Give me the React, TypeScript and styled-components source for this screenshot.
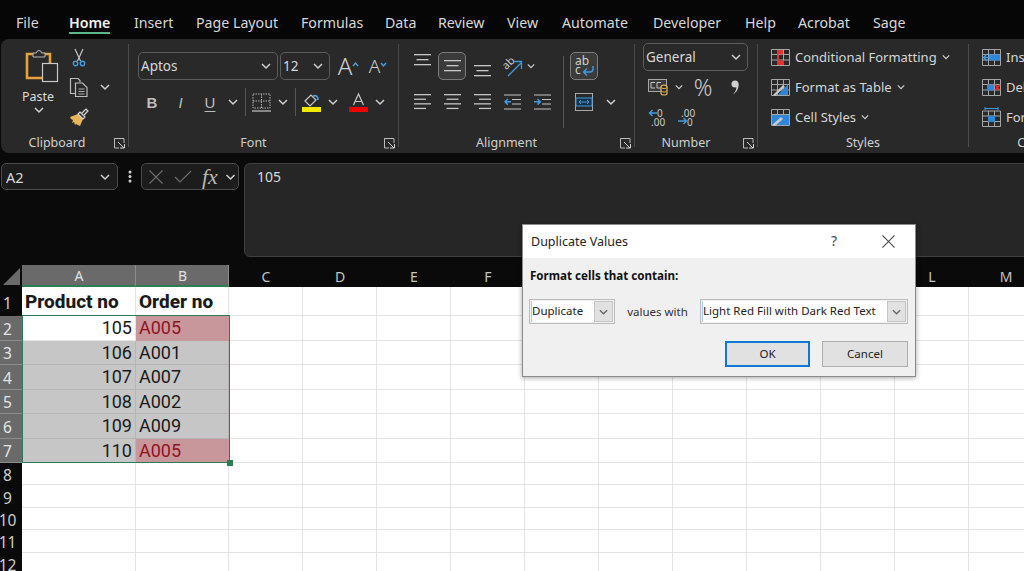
import React from 'react'
import styled, { createGlobalStyle } from 'styled-components'

const GlobalStyle = createGlobalStyle`
  html, body { margin: 0; padding: 0; background: #0a0a0a; overflow: hidden; }
  * { box-sizing: border-box; }
  svg { display: block; flex: none; overflow: visible; }
`

const UI = `"Noto Sans", "Open Sans", "Liberation Sans", sans-serif`

const Page = styled.div`
  position: relative;
  width: 1024px;
  height: 571px;
  overflow: hidden;
  background: #0a0a0a;
  font-family: ${UI};
  color: #dcdcdc;
`

/* menu */
const Menu = styled.nav`
  display: flex;
  height: 39px;
  padding-left: 16px;
  background: #060606;
`
const Tab = styled.div<{ $w: number; $active?: boolean }>`
  flex: none;
  width: ${p => p.$w}px;
  height: 34px;
  padding-top: 13px;
  font-size: 14.2px;
  line-height: 20px;
  white-space: nowrap;
  font-weight: ${p => (p.$active ? 600 : 400)};
  color: ${p => (p.$active ? '#f4f4f4' : '#d8d8d8')};
`
const TabLabel = styled.span<{ $active?: boolean }>`
  display: inline-block;
  height: 21px;
  border-bottom: ${p => (p.$active ? '2px solid #5fb58a' : 'none')};
`

/* ribbon */
const Ribbon = styled.section`
  display: flex;
  width: 1140px;
  height: 114px;
  margin-left: 1px;
  background: #292929;
  border-radius: 8px;
`
const Group = styled.div<{ $w: number }>`
  flex: none;
  width: ${p => p.$w}px;
  display: flex;
  flex-direction: column;
`
const GroupSep = styled.div`
  flex: none;
  width: 1px;
  height: 103px;
  margin-top: 5px;
  background: #4b4b4b;
`
const Body = styled.div<{ $top?: number; $left?: number }>`
  flex: none;
  height: 96px;
  display: flex;
  padding-top: ${p => p.$top ?? 3}px;
  padding-left: ${p => p.$left ?? 0}px;
`
const Footer = styled.div<{ $left?: number }>`
  flex: none;
  display: flex;
  height: 14px;
  margin-top: 1px;
  padding-left: ${p => p.$left ?? 0}px;
  align-items: center;
`
const GroupLabel = styled.div`
  flex: 1;
  text-align: center;
  font-size: 12.5px;
  line-height: 14px;
  color: #cfcfcf;
  white-space: nowrap;
`
const LauncherSlot = styled.div`
  flex: none;
  width: 20px;
  display: flex;
  justify-content: center;
  padding-left: 2px;
`
const Col = styled.div<{ $w?: number }>`
  flex: none;
  display: flex;
  flex-direction: column;
  ${p => (p.$w ? `width: ${p.$w}px;` : '')}
`
const Row = styled.div<{ $h?: number }>`
  display: flex;
  align-items: center;
  height: ${p => p.$h ?? 30}px;
`
const Slot = styled.span<{ $w: number }>`
  flex: none;
  display: flex;
  align-items: center;
  justify-content: center;
  width: ${p => p.$w}px;
  height: 100%;
  color: #d0d0d0;
`
const Pressed = styled.span`
  display: flex;
  align-items: center;
  justify-content: center;
  width: 28px;
  height: 28px;
  border: 1px solid #7c7c7c;
  border-radius: 5px;
  background: #3b3b3b;
`
const InnerSep = styled.span<{ $h: number }>`
  display: block;
  width: 1px;
  height: ${p => p.$h}px;
  background: #565656;
`
const PasteBox = styled.div`
  width: 56px;
  margin-left: 9px;
  display: flex;
  flex-direction: column;
  align-items: center;
  padding-top: 6px;
`
const PasteArt = styled.div`
  margin-left: 7px;
`
const PasteLabel = styled.div`
  margin-top: 5px;
  font-size: 12.5px;
  line-height: 20px;
  color: #dcdcdc;
`
const Field = styled.div<{ $w: number }>`
  flex: none;
  display: flex;
  align-items: center;
  justify-content: space-between;
  width: ${p => p.$w}px;
  height: 28px;
  padding: 0 6px 0 2px;
  border: 1px solid #5c5c5c;
  border-radius: 5px;
  font-size: 13.5px;
  color: #d8d8d8;
`
const FontA = styled.span<{ $size: number }>`
  font-size: ${p => p.$size}px;
  font-weight: 300;
  line-height: 1;
  color: #cfcfcf;
`
const FormatB = styled.span<{ $bold?: boolean; $italic?: boolean; $under?: boolean }>`
  font-family: "Liberation Sans", sans-serif;
  font-size: 15px;
  font-weight: ${p => (p.$bold ? 700 : 400)};
  font-style: ${p => (p.$italic ? 'italic' : 'normal')};
  color: #bdbdbd;
  ${p => (p.$under ? 'text-decoration: underline; text-underline-offset: 3px;' : '')}
`
const Percent = styled.span`
  font-size: 23px;
  font-weight: 300;
  line-height: 1;
  color: #c9c9c9;
`
const StyleRow = styled.div`
  display: flex;
  align-items: center;
  gap: 5px;
  height: 30px;
  font-size: 13px;
  white-space: nowrap;
  color: #d6d6d6;
`
const Caret = styled.span`
  margin-left: 2px;
  display: flex;
`

/* formula bar */
const FormulaArea = styled.section`
  display: flex;
  height: 112px;
  padding: 10px 0 8px 1px;
`
const NameBox = styled.div`
  flex: none;
  display: flex;
  align-items: center;
  justify-content: space-between;
  width: 117px;
  height: 27px;
  padding: 0 6px 0 4px;
  border: 1px solid #4a4a4a;
  border-radius: 5px;
  background: #1c1c1c;
  font-size: 14.5px;
  color: #d8d8d8;
`
const DotsSlot = styled.div`
  flex: none;
  width: 23px;
  height: 27px;
  display: flex;
  align-items: center;
  justify-content: center;
`
const FxBox = styled.div`
  flex: none;
  display: flex;
  align-items: center;
  width: 98px;
  height: 27px;
  padding-left: 7px;
  border: 1px solid #4a4a4a;
  border-radius: 5px;
  background: #1c1c1c;
`
const FxText = styled.span`
  width: 23px;
  margin-left: 10px;
  font-family: "Liberation Serif", serif;
  font-style: italic;
  font-size: 22px;
  line-height: 1;
  color: #b8b8b8;
`
const FormulaInput = styled.div`
  flex: none;
  width: 800px;
  margin-left: 5px;
  padding: 1px 0 0 12px;
  border: 1px solid #3f3f3f;
  border-radius: 6px;
  background: #262626;
  font-size: 14px;
  line-height: 24px;
  color: #d8d8d8;
`

/* sheet */
const Sheet = styled.section`
  position: relative;
  display: grid;
  grid-template-columns: 22px 114px 93px repeat(11, 74px);
  grid-template-rows: 22px 29px repeat(6, 24.5px) repeat(5, 22.4px);
`
const Corner = styled.div`
  display: flex;
  align-items: flex-end;
  justify-content: flex-end;
  padding: 0 2px 2px 0;
`
const ColHead = styled.div<{ $sel?: boolean }>`
  display: flex;
  align-items: center;
  justify-content: center;
  padding: 1px 0 0 1px;
  font-size: 14px;
  color: ${p => (p.$sel ? '#e0e0e0' : '#c4c4c4')};
  background: ${p => (p.$sel ? '#6a6a6a' : '#0a0a0a')};
  border-right: 1px solid ${p => (p.$sel ? '#8c8c8c' : '#0a0a0a')};
  ${p => (p.$sel ? 'border-bottom: 2px solid #2d7d54;' : '')}
`
const RowHead = styled.div<{ $sel?: boolean }>`
  display: flex;
  align-items: center;
  justify-content: center;
  padding: 2px 7px 0 0;
  font-size: 15.5px;
  line-height: 20px;
  color: ${p => (p.$sel ? '#e4e4e4' : '#cfcfcf')};
  background: ${p => (p.$sel ? '#6a6a6a' : '#0a0a0a')};
  ${p => (p.$sel ? 'border-bottom: 1px solid #8c8c8c;' : '')}
`
const Cell = styled.div<{ $fill?: string; $align?: string; $color?: string; $bold?: boolean; $line?: string }>`
  display: flex;
  align-items: center;
  justify-content: ${p => (p.$align === 'right' ? 'flex-end' : 'flex-start')};
  padding: 0 3px;
  font-family: Roboto, "Liberation Sans", sans-serif;
  font-size: ${p => (p.$bold ? 19 : 18)}px;
  font-weight: ${p => (p.$bold ? 800 : 400)};
  color: ${p => p.$color ?? '#1a1a1a'};
  background: ${p => p.$fill ?? '#ffffff'};
  border-right: 1px solid ${p => p.$line ?? '#e4e4e4'};
  border-bottom: 1px solid ${p => p.$line ?? '#e4e4e4'};
  white-space: nowrap;
  overflow: hidden;
`
const Selection = styled.div`
  position: absolute;
  left: 22px;
  top: 50px;
  width: 208px;
  height: 148px;
  border: 1.5px solid #2d7d54;
  pointer-events: none;
`
const FillHandle = styled.div`
  position: absolute;
  right: -4px;
  bottom: -4px;
  width: 6px;
  height: 6px;
  background: #2d7d54;
`

/* dialog */
const Dialog = styled.div`
  position: absolute;
  left: 522px;
  top: 224px;
  width: 394px;
  height: 153px;
  background: #f0f0f0;
  border: 1px solid #8a8a8a;
  box-shadow: 0 1px 5px rgba(0, 0, 0, 0.35);
  color: #222;
`
const DialogTitle = styled.div`
  display: flex;
  align-items: center;
  height: 33px;
  padding-left: 8px;
  background: #fff;
  font-size: 12.5px;
`
const TitleText = styled.span`
  flex: 1;
`
const HelpMark = styled.span`
  width: 51px;
  font-size: 14px;
  color: #444;
  margin-bottom: 2px;
`
const CloseSlot = styled.span`
  width: 33px;
`
const FormatLabel = styled.div`
  margin: 10px 0 0 7px;
  font-size: 11.6px;
  font-weight: 700;
  line-height: 16px;
  color: #111;
`
const DialogRow = styled.div`
  display: flex;
  align-items: center;
  margin: 15px 0 0 6px;
  height: 25px;
`
const Combo = styled.div<{ $w: number }>`
  flex: none;
  display: flex;
  width: ${p => p.$w}px;
  height: 25px;
  padding: 1px;
  border: 1px solid #bcbcbc;
  background: #f0f0f0;
`
const ComboText = styled.div`
  flex: 1;
  display: flex;
  align-items: center;
  background: #fff;
  padding: 0 0 2px 0;
  font-size: 11.5px;
  white-space: nowrap;
  border-left: 1px solid #9fd0f0;
`
const ComboBtn = styled.div`
  flex: none;
  width: 19px;
  display: flex;
  align-items: center;
  justify-content: center;
  background: #e1e1e1;
  border: 1px solid #c4c4c4;
`
const WithLabel = styled.div`
  flex: none;
  width: 85px;
  text-align: center;
  font-size: 11.5px;
  color: #333;
`
const DialogActions = styled.div`
  display: flex;
  justify-content: flex-end;
  gap: 12px;
  margin: 17px 7px 0 0;
`
const DialogButton = styled.div<{ $primary?: boolean }>`
  width: ${p => (p.$primary ? 85 : 86)}px;
  height: 26px;
  display: flex;
  align-items: center;
  justify-content: center;
  padding-bottom: 2px;
  font-size: 11.5px;
  background: #e1e1e1;
  border: ${p => (p.$primary ? '2px solid #0f78d4' : '1px solid #adadad')};
  color: #222;
`

/* icons */
const Chev = ({ c = '#cfcfcf', w = 10 }: { c?: string; w?: number }) => (
  <svg width={w} height={6} viewBox="0 0 10 6">
    <path d="M1 1l4 4 4-4" fill="none" stroke={c} strokeWidth={1.5} />
  </svg>
)
const Launcher = () => (
  <svg width={11} height={11} viewBox="0 0 11 11" fill="none">
    <path d="M5 .5H.5V10H5M.5 .5H10V5" stroke="#bbb" />
    <path d="M4 4l6 6M6 10h4.5V6" stroke="#d0d0d0" />
  </svg>
)
const PasteIcon = () => (
  <svg width={34} height={34} viewBox="0 0 34 34" fill="none">
    <path d="M9 6H2v24h18" stroke="#e6a03c" strokeWidth={2.6} />
    <path d="M17 6h8v9" stroke="#e6a03c" strokeWidth={2.6} />
    <path d="M8 9V5h3.5a2.5 2.5 0 0 1 5 0H20v4z" fill="#292929" stroke="#b8b8b8" />
    <rect x="17.5" y="15.5" width="15" height="18" fill="#292929" stroke="#c8c8c8" strokeWidth={1.2} />
  </svg>
)
const ScissorsIcon = () => (
  <svg width={14} height={19} viewBox="0 0 14 19" fill="none">
    <path d="M3 1l5.500 12M11 1L5.500 13" stroke="#c4c4c4" strokeWidth={1.2} />
    <circle cx="3.500" cy="15.500" r="2.200" stroke="#3f9be0" strokeWidth={1.4} />
    <circle cx="10.500" cy="15.500" r="2.200" stroke="#3f9be0" strokeWidth={1.4} />
  </svg>
)
const CopyIcon = () => (
  <svg width={20} height={20} viewBox="0 0 20 20" fill="none" stroke="#bdbdbd">
    <path d="M6 16.500H1.500v-15H9l2 2v2" strokeWidth={1.2} />
    <path d="M6.500 6h7l4.500 4.500v9H6.500z" strokeWidth={1.2} />
    <path d="M9.500 12h6M9.500 14.500h6M9.500 17h6" strokeWidth={0.9} />
  </svg>
)
const BrushIcon = () => (
  <svg width={20} height={19} viewBox="0 0 20 19" fill="none">
    <path d="M1 9l8-3 5 5-3 7-4-2-1 1-1-3-2 1 1-3-2-1z" fill="#e9b45a" />
    <path d="M9 6l5 5 2-2-5-5zM13 5l4-4 2 2-4 4" stroke="#d8d8d8" strokeWidth={1.2} />
  </svg>
)
const BorderIcon = () => (
  <svg width={19} height={19} viewBox="0 0 19 19" fill="none" stroke="#b0b0b0">
    <path d="M1 1h17v14H1zM9.500 1v14M1 8h17" strokeDasharray="1.500 1" />
    <path d="M0 18h19" strokeWidth={1.4} />
  </svg>
)
const FillIcon = () => (
  <svg width={19} height={19} viewBox="0 0 19 19" fill="none">
    <path d="M3 8l6-6 5 5-6 6z" stroke="#c8c8c8" strokeWidth={1.2} />
    <path d="M11 3c3-1 5 0 5 4" stroke="#4fa3e0" strokeWidth={1.6} />
    <rect x="0" y="14" width="19" height="5" fill="#f5e800" />
  </svg>
)
const FontColorIcon = () => (
  <svg width={19} height={19} viewBox="0 0 19 19" fill="none">
    <path d="M4.500 12L9.500 1l5 11M6.500 8.500h6" stroke="#c8c8c8" strokeWidth={1.2} />
    <rect x="0" y="14" width="19" height="5" fill="#ef0000" />
  </svg>
)
const Lines = ({ rows, align = 'left', w = 17, step = 4.6 }: { rows: number[]; align?: string; w?: number; step?: number }) => (
  <svg width={w} height={(rows.length - 1) * step + 2} viewBox={`0 0 ${w} ${(rows.length - 1) * step + 2}`}>
    {rows.map((l, i) => {
      const x = align === 'left' ? 0 : align === 'right' ? w - l : (w - l) / 2
      return <rect key={i} x={x} y={i * step} width={l} height={1.3} fill="#c4c4c4" />
    })}
  </svg>
)
const VAlign = ({ offset }: { offset: number }) => (
  <svg width={17} height={24} viewBox="0 0 17 24">
    {[17, 12, 17].map((l, i) => (
      <rect key={i} x={(17 - l) / 2} y={offset + i * 5} width={l} height={1.3} fill="#c8c8c8" />
    ))}
  </svg>
)
const OrientIcon = () => (
  <svg width={22} height={22} viewBox="0 0 22 22" fill="none">
    <text x="1" y="13" fontSize="11" fill="#c8c8c8" fontFamily="Noto Sans, sans-serif" transform="rotate(-45 6 9)">ab</text>
    <path d="M7 21L20 8M13 6.500h7.500V14" stroke="#3f9be0" strokeWidth={1.3} />
  </svg>
)
const IndentIcon = ({ dir }: { dir: number }) => (
  <svg width={17} height={16} viewBox="0 0 17 16" fill="none">
    <path d="M0 1h17M8 5.500h9M8 10h9M0 15h17" stroke="#c4c4c4" strokeWidth={1.2} />
    {dir < 0
      ? <path d="M7 7.800H1M3.800 5L1 7.800l2.800 2.800" stroke="#3f9be0" strokeWidth={1.5} />
      : <path d="M0 7.800h6M3.500 5l2.800 2.800L3.500 10.600" stroke="#3f9be0" strokeWidth={1.5} />}
  </svg>
)
const WrapIcon = () => (
  <svg width={22} height={24} viewBox="0 0 22 24" fill="none">
    <text x="2" y="11" fontSize="12" fill="#cfcfcf" fontFamily="Noto Sans, sans-serif">ab</text>
    <text x="2" y="20" fontSize="12" fill="#cfcfcf" fontFamily="Noto Sans, sans-serif">c</text>
    <path d="M20 12v3a3 3 0 0 1-3 3h-6M14 14.500L10.500 18l3.500 3.500" stroke="#3f9be0" strokeWidth={1.4} />
  </svg>
)
const MergeIcon = () => (
  <svg width={18} height={18} viewBox="0 0 18 18" fill="none">
    <rect x=".5" y=".5" width="17" height="17" stroke="#a8a8a8" />
    <rect x="1" y="5" width="16" height="8" fill="#16324a" stroke="#3f9be0" />
    <path d="M4 9h10M6 7L4 9l2 2M12 7l2 2-2 2" stroke="#3f9be0" />
  </svg>
)
const AccountingIcon = () => (
  <svg width={20} height={17} viewBox="0 0 20 17" fill="none">
    <rect x=".5" y=".5" width="18" height="12" fill="#3a3a3a" stroke="#a8a8a8" />
    <path d="M3 3.500h4M3 9h4M3 3.500v5.500M9 3.500h4M9 3.500v5.500h4" stroke="#c8c8c8" />
    <path d="M13 8c0-2.500 6-2.500 6 0v6.500c0 2-6 2-6 0z" fill="#292929" stroke="#e2b458" strokeWidth={1.2} />
    <path d="M13 8c0 2 6 2 6 0M13 11.500c0 2 6 2 6 0" stroke="#e2b458" />
  </svg>
)
const CommaIcon = () => (
  <svg width={10} height={15} viewBox="0 0 10 15">
    <circle cx="5" cy="4" r="3.500" fill="#d0d0d0" />
    <path d="M8.500 4c.5 4-1.500 8-5.500 10.500C6 11 7 8 6 6z" fill="#d0d0d0" />
  </svg>
)
const DecimalIcon = ({ more }: { more?: boolean }) => (
  <svg width={20} height={17} viewBox="0 0 20 17" fill="none">
    <text x={more ? 3 : 9} y="7.500" fontSize="10" fill="#c8c8c8" fontFamily="Noto Sans, sans-serif">{more ? '.00' : '0'}</text>
    <text x={more ? 9 : 3} y="16.500" fontSize="10" fill="#c8c8c8" fontFamily="Noto Sans, sans-serif">{more ? '0' : '.00'}</text>
    {more
      ? <path d="M0 12h8M5.500 9l3 3-3 3" stroke="#3f9be0" strokeWidth={1.4} />
      : <path d="M9 4H1.500M4.500 1l-3 3 3 3" stroke="#3f9be0" strokeWidth={1.4} />}
  </svg>
)
const GridBase = ({ children }: { children?: React.ReactNode }) => (
  <svg width={19} height={17} viewBox="0 0 19 17" fill="none">
    <path d="M.5 .5h18v16H.5zM6.500 .5v16M12.500 .5v16M.5 5.500h18M.5 11h18" stroke="#a6a6a6" />
    {children}
  </svg>
)
const CondIcon = () => (
  <GridBase>
    <rect x="6" y="1" width="6" height="4.500" fill="#e83030" />
    <rect x="6" y="5.500" width="2" height="6" fill="#e83030" />
    <rect x="6" y="11.500" width="7" height="4.500" fill="#e83030" />
  </GridBase>
)
const TableIcon = () => (
  <GridBase>
    <path d="M7 16L17 5v11z" fill="#2f86d8" />
    <path d="M2 16L12 6l2 2L4 17z" fill="#c8c8c8" />
  </GridBase>
)
const CellStyleIcon = () => (
  <GridBase>
    <rect x="1" y="6" width="17" height="10" fill="#2f86d8" />
    <path d="M1 16L10 8l2 2-8 7z" fill="#c8c8c8" />
  </GridBase>
)
const InsertIcon = () => (
  <GridBase>
    <rect x="7" y="5.500" width="11" height="6" fill="#2f86d8" />
    <path d="M9 8.500H2M5 5L1.500 8.500 5 12" stroke="#3f9be0" strokeWidth={1.3} />
  </GridBase>
)
const DeleteIcon = () => (
  <GridBase>
    <rect x="5" y="5.500" width="7" height="6" fill="#2f86d8" />
    <path d="M13 5.500l5 6M18 5.500l-5 6" stroke="#ea3030" strokeWidth={1.5} />
  </GridBase>
)
const FormatIcon = () => (
  <svg width={19} height={20} viewBox="0 0 19 20" fill="none">
    <path d="M3 1.500h13M3 0v3M16 0v3" stroke="#3f9be0" />
    <path d="M.5 4h18v15.500H.5zM6.500 4v15.500M12.500 4v15.500M.5 9h18M.5 14.500h18" stroke="#a6a6a6" />
    <rect x="6" y="9" width="7" height="6" fill="#2f86d8" />
  </svg>
)
const Dots = () => (
  <svg width={4} height={13} viewBox="0 0 4 13" fill="#d0d0d0">
    <circle cx="2" cy="2" r="1.500" /><circle cx="2" cy="6.500" r="1.500" /><circle cx="2" cy="11" r="1.500" />
  </svg>
)
const CrossIcon = ({ c = '#6e6e6e', s = 14 }: { c?: string; s?: number }) => (
  <svg width={s} height={s} viewBox="0 0 14 14">
    <path d="M.5 .5l13 13M13.500 .5l-13 13" stroke={c} strokeWidth={1.1} fill="none" />
  </svg>
)
const CheckIcon = () => (
  <svg width={18} height={13} viewBox="0 0 18 13">
    <path d="M1 7l5 5L17 1" stroke="#6e6e6e" strokeWidth={1.1} fill="none" />
  </svg>
)
const CornerTriangle = () => (
  <svg width={17} height={17} viewBox="0 0 17 17"><path d="M17 0v17H0z" fill="#6a6a6a" /></svg>
)

const tabs: [string, number][] = [
  ['File', 53], ['Home', 65], ['Insert', 62], ['Page Layout', 105], ['Formulas', 84], ['Data', 53], ['Review', 69],
  ['View', 55], ['Automate', 91], ['Developer', 92], ['Help', 53], ['Acrobat', 75], ['Sage', 60],
]
const columns = ['A', 'B', 'C', 'D', 'E', 'F', 'G', 'H', 'I', 'J', 'K', 'L', 'M']
const sheetRows: [string, string, boolean][] = [
  ['105', 'A005', true], ['106', 'A001', false], ['107', 'A007', false],
  ['108', 'A002', false], ['109', 'A009', false], ['110', 'A005', true],
]
const SEL = '#c6c6c6'
const SEL_LINE = '#b6b6b6'
const DUP = '#c8979c'

const BlankCells = ({ row }: { row: number }) => (
  <>{columns.slice(2).map(c => <Cell key={c + row} />)}</>
)

const App = () => (
  <Page>
    <GlobalStyle />
    <Menu>
      {tabs.map(([t, w]) => (
        <Tab key={t} $w={w} $active={t === 'Home'}><TabLabel $active={t === 'Home'}>{t}</TabLabel></Tab>
      ))}
    </Menu>

    <Ribbon>
      <Group $w={127}>
        <Body>
          <PasteBox>
            <PasteArt><PasteIcon /></PasteArt>
            <PasteLabel>Paste</PasteLabel>
            <Caret><Chev /></Caret>
          </PasteBox>
          <Col $w={26}>
            <Row><Slot $w={26}><ScissorsIcon /></Slot></Row>
            <Row><Slot $w={26}><CopyIcon /></Slot></Row>
            <Row><Slot $w={26}><BrushIcon /></Slot></Row>
          </Col>
          <Col $w={26}>
            <Row />
            <Row><Slot $w={26}><Chev /></Slot></Row>
          </Col>
        </Body>
        <Footer $left={5}><GroupLabel>Clipboard</GroupLabel><LauncherSlot><Launcher /></LauncherSlot></Footer>
      </Group>
      <GroupSep />

      <Group $w={269}>
        <Body $top={9} $left={9}>
          <Col>
            <Row $h={36}>
              <Field $w={140}>Aptos<Chev /></Field>
              <Slot $w={2} />
              <Field $w={50}>12<Chev /></Field>
              <Slot $w={37}><FontA $size={24}>A</FontA><svg width={7} height={10} viewBox="0 0 7 10"><path d="M1 5l2.500-3L6 5" fill="none" stroke="#4fa3e0" strokeWidth={1.3} /></svg></Slot>
              <Slot $w={22}><FontA $size={19}>A</FontA><svg width={7} height={10} viewBox="0 0 7 10"><path d="M1 2l2.500 3L6 2" fill="none" stroke="#4fa3e0" strokeWidth={1.3} /></svg></Slot>
            </Row>
            <Row $h={36}>
              <Slot $w={28}><FormatB $bold>B</FormatB></Slot>
              <Slot $w={29}><FormatB $italic>I</FormatB></Slot>
              <Slot $w={30}><FormatB $under>U</FormatB></Slot>
              <Slot $w={16}><Chev /></Slot>
              <Slot $w={8}><InnerSep $h={28} /></Slot>
              <Slot $w={24}><BorderIcon /></Slot>
              <Slot $w={20}><Chev /></Slot>
              <Slot $w={4}><InnerSep $h={28} /></Slot>
              <Slot $w={28}><FillIcon /></Slot>
              <Slot $w={16}><Chev /></Slot>
              <Slot $w={34}><FontColorIcon /></Slot>
              <Slot $w={10}><Chev /></Slot>
            </Row>
          </Col>
        </Body>
        <Footer><GroupLabel>Font</GroupLabel><LauncherSlot><Launcher /></LauncherSlot></Footer>
      </Group>
      <GroupSep />

      <Group $w={235}>
        <Body $top={9} $left={8}>
          <Col $w={156}>
            <Row $h={36}>
              <Slot $w={30}><VAlign offset={0} /></Slot>
              <Slot $w={30}><Pressed><VAlign offset={6} /></Pressed></Slot>
              <Slot $w={30}><VAlign offset={11} /></Slot>
              <Slot $w={30}><OrientIcon /></Slot>
              <Slot $w={8}><Chev w={8} /></Slot>
            </Row>
            <Row $h={36}>
              <Slot $w={30}><Lines rows={[17, 12, 17, 12]} /></Slot>
              <Slot $w={30}><Lines rows={[17, 12, 17, 12]} align="center" /></Slot>
              <Slot $w={30}><Lines rows={[17, 12, 17, 12]} align="right" /></Slot>
              <Slot $w={30}><IndentIcon dir={-1} /></Slot>
              <Slot $w={30}><IndentIcon dir={1} /></Slot>
            </Row>
          </Col>
          <Slot $w={1}><InnerSep $h={72} /></Slot>
          <Col>
            <Row $h={36}><Slot $w={6} /><Pressed><WrapIcon /></Pressed></Row>
            <Row $h={36}><Slot $w={11} /><MergeIcon /><Slot $w={36}><Chev /></Slot></Row>
          </Col>
        </Body>
        <Footer><GroupLabel>Alignment</GroupLabel><LauncherSlot><Launcher /></LauncherSlot></Footer>
      </Group>
      <GroupSep />

      <Group $w={122}>
        <Body $left={8}>
          <Col>
            <Row><Field $w={105}>General<Chev /></Field></Row>
            <Row>
              <Slot $w={30}><AccountingIcon /></Slot>
              <Slot $w={11}><Chev w={8} /></Slot>
              <Slot $w={38}><Percent>%</Percent></Slot>
              <Slot $w={26}><CommaIcon /></Slot>
            </Row>
            <Row>
              <Slot $w={30}><DecimalIcon /></Slot>
              <Slot $w={30}><DecimalIcon more /></Slot>
            </Row>
          </Col>
        </Body>
        <Footer><GroupLabel>Number</GroupLabel><LauncherSlot><Launcher /></LauncherSlot></Footer>
      </Group>
      <GroupSep />

      <Group $w={210}>
        <Body $left={13}>
          <Col>
            <StyleRow><CondIcon />Conditional Formatting <Chev w={8} /></StyleRow>
            <StyleRow><TableIcon />Format as Table <Chev w={8} /></StyleRow>
            <StyleRow><CellStyleIcon />Cell Styles <Chev w={8} /></StyleRow>
          </Col>
        </Body>
        <Footer><GroupLabel>Styles</GroupLabel></Footer>
      </Group>
      <GroupSep />

      <Group $w={124}>
        <Body $left={13}>
          <Col>
            <StyleRow><InsertIcon />Insert</StyleRow>
            <StyleRow><DeleteIcon />Delete</StyleRow>
            <StyleRow><FormatIcon />Format</StyleRow>
          </Col>
        </Body>
        <Footer><GroupLabel>Cells</GroupLabel></Footer>
      </Group>
    </Ribbon>

    <FormulaArea>
      <NameBox>A2<Chev w={12} /></NameBox>
      <DotsSlot><Dots /></DotsSlot>
      <FxBox>
        <CrossIcon />
        <Slot $w={11} />
        <CheckIcon />
        <FxText>fx</FxText>
        <Chev w={11} />
      </FxBox>
      <FormulaInput>105</FormulaInput>
    </FormulaArea>

    <Sheet>
      <Corner><CornerTriangle /></Corner>
      {columns.map((c, i) => <ColHead key={c} $sel={i < 2}>{c}</ColHead>)}

      <RowHead>1</RowHead>
      <Cell $bold>Product no</Cell>
      <Cell $bold>Order no</Cell>
      <BlankCells row={1} />

      {sheetRows.map(([num, code, dup], i) => {
        const active = i === 0
        return (
          <React.Fragment key={num}>
            <RowHead $sel>{i + 2}</RowHead>
            <Cell $align="right" $fill={active ? '#fff' : SEL} $line={active ? undefined : SEL_LINE}>{num}</Cell>
            <Cell $fill={dup ? DUP : SEL} $color={dup ? '#8f1421' : undefined} $line={dup ? DUP : SEL_LINE}>{code}</Cell>
            <BlankCells row={i + 2} />
          </React.Fragment>
        )
      })}

      {[8, 9, 10, 11, 12].map(n => (
        <React.Fragment key={n}>
          <RowHead>{n}</RowHead>
          <Cell />
          <Cell />
          <BlankCells row={n} />
        </React.Fragment>
      ))}
      <Selection><FillHandle /></Selection>
    </Sheet>

    <Dialog>
      <DialogTitle>
        <TitleText>Duplicate Values</TitleText>
        <HelpMark>?</HelpMark>
        <CloseSlot><CrossIcon c="#444" s={13} /></CloseSlot>
      </DialogTitle>
      <FormatLabel>Format cells that contain:</FormatLabel>
      <DialogRow>
        <Combo $w={86}><ComboText>Duplicate</ComboText><ComboBtn><Chev c="#666" w={9} /></ComboBtn></Combo>
        <WithLabel>values with</WithLabel>
        <Combo $w={208}><ComboText>Light Red Fill with Dark Red Text</ComboText><ComboBtn><Chev c="#666" w={9} /></ComboBtn></Combo>
      </DialogRow>
      <DialogActions>
        <DialogButton $primary>OK</DialogButton>
        <DialogButton>Cancel</DialogButton>
      </DialogActions>
    </Dialog>
  </Page>
)

export default App
